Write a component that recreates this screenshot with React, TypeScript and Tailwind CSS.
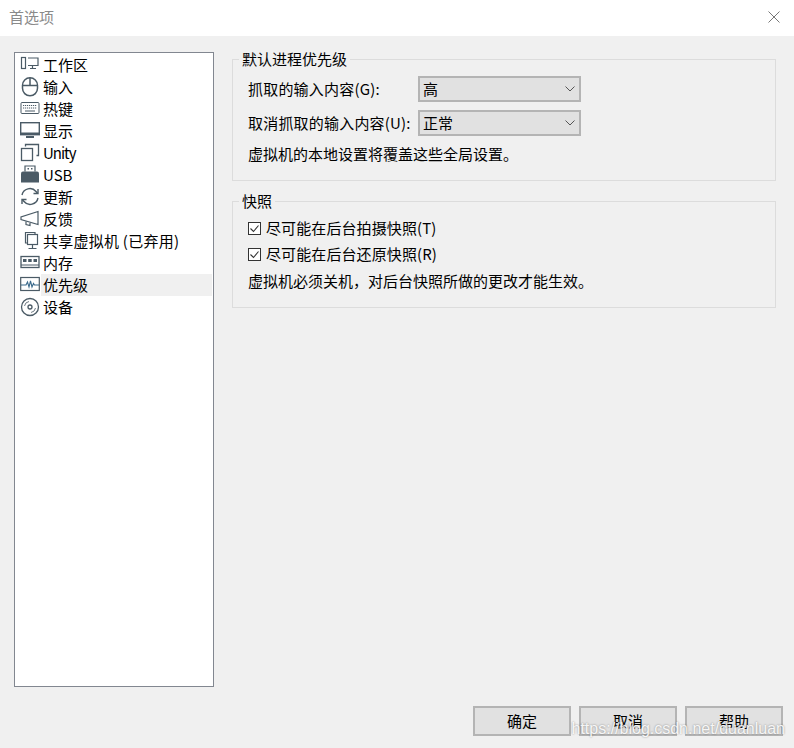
import React from "react";

const font = { fontFamily: '"Noto Sans CJK SC", "Liberation Sans", sans-serif' };
const c = "#4b5b66";

const icons: Record<string, React.ReactNode> = {
  workspace: (
    <g fill="none" stroke={c} strokeWidth="1.2">
      <rect x="1.5" y="2.5" width="4" height="11" />
      <path d="M8 3h10v7.5H8M12.5 10.5v2.5M10 13.5h6" />
    </g>
  ),
  mouse: (
    <g fill="none" stroke={c} strokeWidth="1.5">
      <rect x="2.5" y="0.8" width="15" height="18" rx="7.5" />
      <path d="M2.5 8.5h15M10 0.8v7.7" />
    </g>
  ),
  keyboard: (
    <g fill="none" stroke={c}>
      <rect x="1" y="3.5" width="18" height="11" rx="1" />
      <path d="M3 6.5h14M3 9h14" strokeDasharray="1.2 .8" />
      <path d="M5 12h10" />
    </g>
  ),
  display: (
    <g fill="none" stroke={c} strokeWidth="1.4">
      <rect x="0.7" y="1.7" width="18.6" height="12" />
      <path d="M0.7 12.5h18.6" strokeWidth="2" />
      <path d="M6 16h8" strokeWidth="2" />
    </g>
  ),
  unity: (
    <g fill="none" stroke={c} strokeWidth="1.3">
      <rect x="1.5" y="5.5" width="11" height="12" />
      <path d="M5.5 3.5V1.5h13v11h-2" />
    </g>
  ),
  usb: (
    <g>
      <path d="M1 8.5q0-2 2-2h14q2 0 2 2v9H1z" fill={c} />
      <path d="M5 6.5V1h10v5.5" fill="none" stroke={c} strokeWidth="1.2" />
      <path d="M7.5 3h1.5v1.5H7.5zM11 3h1.5v1.5H11z" fill={c} />
    </g>
  ),
  update: (
    <g fill="none" stroke={c} strokeWidth="1.4">
      <path d="M2 8a8 8 0 0 1 14-3.5l1.5 1.8" />
      <path d="M18 2v4.5h-4.5" />
      <path d="M18 11a8 8 0 0 1-14 3.5l-1.5-1.8" />
      <path d="M2 17v-4.5h4.5" />
    </g>
  ),
  feedback: (
    <g fill="none" stroke={c} strokeWidth="1.2">
      <path d="M1 8v2.5l17 5V2.5z" />
      <path d="M6 12.5v3l4 1v-2.5" />
    </g>
  ),
  share: (
    <g fill="none" stroke={c} strokeWidth="1.2">
      <rect x="7.5" y="3.5" width="10" height="10" />
      <path d="M7.5 12H5.5V1.5H15v2M12.5 13.5v3.5M8.5 17.5h8" />
    </g>
  ),
  memory: (
    <g fill="none" stroke={c}>
      <rect x="1" y="3.5" width="18" height="11" strokeWidth="1.3" />
      <path d="M3 6h3.5v3H3zM8.2 6h3.5v3H8.2zM13.5 6H17v3h-3.5z" fill={c} stroke="none" />
      <path d="M1 12h18" />
    </g>
  ),
  priority: (
    <g fill="none" stroke={c}>
      <rect x="0.7" y="2.5" width="18.6" height="13" strokeWidth="1.2" />
      <path d="M1 10h5l1.5-3 1.5 5 1.5-6 1.5 6 1.5-3.5 1 1.5H19" strokeWidth="1.1" stroke="#3a6a8c" />
    </g>
  ),
  device: (
    <g fill="none" stroke={c} strokeWidth="1.3">
      <circle cx="10" cy="10" r="8.5" />
      <circle cx="10" cy="10" r="2" />
      <path d="M4.5 9a5.5 5.5 0 0 1 4.5-4.5M15.5 11a5.5 5.5 0 0 1-4.5 4.5" strokeWidth="0.8" />
    </g>
  ),
};

const items: [string, string][] = [
  ["workspace", "工作区"],
  ["mouse", "输入"],
  ["keyboard", "热键"],
  ["display", "显示"],
  ["unity", "Unity"],
  ["usb", "USB"],
  ["update", "更新"],
  ["feedback", "反馈"],
  ["share", "共享虚拟机 (已弃用)"],
  ["memory", "内存"],
  ["priority", "优先级"],
  ["device", "设备"],
];

function Select({ value }: { value: string }) {
  return (
    <div className="flex h-[26px] w-[163px] items-center justify-between border-2 border-[#b4b4b4] bg-[#e1e1e1] pl-[3px] pr-[4px]">
      <span>{value}</span>
      <svg width="10" height="6" viewBox="0 0 10 6" fill="none" stroke="#555" strokeWidth="1">
        <path d="M0.5 0.5l4.5 4.5 4.5-4.5" />
      </svg>
    </div>
  );
}

function Check({ label }: { label: string }) {
  return (
    <div className="flex h-[22px] items-center gap-[5px]">
      <svg width="13" height="13" viewBox="0 0 13 13" fill="none" className="shrink-0">
        <rect x="0.5" y="0.5" width="12" height="12" fill="#fff" stroke="#333" />
        <path d="M2.5 6.5l3 3 5-6" stroke="#333" strokeWidth="1.1" />
      </svg>
      <span className="tracking-[0.1px]">{label}</span>
    </div>
  );
}

function Group({ title, className, children }: { title: string; className: string; children: React.ReactNode }) {
  return (
    <fieldset className={`border border-[#dcdcdc] pl-[15px] ${className}`}>
      <legend className="-ml-[9px] px-[3px] leading-[14px]">{title}</legend>
      {children}
    </fieldset>
  );
}

function Btn({ label }: { label: string }) {
  return (
    <div className="flex h-[30px] w-[98px] items-center justify-center border-2 border-[#b4b4b4] bg-[#e1e1e1] text-black">
      {label}
    </div>
  );
}

export default function App() {
  return (
    <div className="relative flex h-[748px] w-[794px] flex-col overflow-hidden bg-[#f0f0f0] text-[15px] text-black" style={font}>
      <div className="flex h-[36px] items-center justify-between bg-white pb-[2px] pl-[9px] pr-[14px] text-[#8a8a8a]">
        <span>首选项</span>
        <svg width="12" height="12" viewBox="0 0 12 12" stroke="#777" strokeWidth="1" fill="none">
          <path d="M0.5 0.5l11 11M11.5 0.5l-11 11" />
        </svg>
      </div>
      <div className="flex flex-1 flex-col pl-[14px] pr-[11px]">
        <div className="flex flex-1 gap-[18px] pt-[16px]">
          <div className="h-[635px] w-[200px] border border-[#828790] bg-white px-[1px] pt-[1px]">
            {items.map(([k, t]) => (
              <div key={k} className="flex h-[22px] items-center">
                <svg width="20" height="20" viewBox="0 0 20 20" className="ml-[4px] shrink-0">
                  {icons[k]}
                </svg>
                <span className={`ml-[1px] flex h-[22px] flex-1 items-center pl-[2px] ${k === "priority" ? "bg-[#f0f0f0]" : ""}`}>
                  <span className={k === "unity" ? "tracking-[-1px]" : k === "share" ? "tracking-[0.25px]" : ""}>{t}</span>
                </span>
              </div>
            ))}
          </div>
          <div className="mr-[7px] flex flex-1 flex-col gap-[13px]">
            <Group title="默认进程优先级" className="h-[129px]">
              <div className="mt-[9px] flex h-[28px] items-center">
                <span className="w-[170px] tracking-[0.2px]">抓取的输入内容(G):</span>
                <Select value="高" />
              </div>
              <div className="mt-[6px] flex h-[28px] items-center">
                <span className="w-[170px] tracking-[0.2px]">取消抓取的输入内容(U):</span>
                <Select value="正常" />
              </div>
              <div className="mt-[5px] leading-[24px]">虚拟机的本地设置将覆盖这些全局设置。</div>
            </Group>
            <Group title="快照" className="h-[114px]">
              <div className="pt-[9px]">
                <Check label="尽可能在后台拍摄快照(T)" />
                <div className="mt-[4px]"><Check label="尽可能在后台还原快照(R)" /></div>
                <div className="mt-[4px] leading-[24px]">虚拟机必须关机，对后台快照所做的更改才能生效。</div>
              </div>
            </Group>
          </div>
        </div>
        <div className="flex h-[42px] items-start justify-end gap-[8px]">
          <Btn label="确定" />
          <Btn label="取消" />
          <Btn label="帮助" />
        </div>
      </div>
      <div className="absolute bottom-[7px] right-[9px] text-[16px] text-white/90 [text-shadow:0_0_2px_rgba(0,0,0,0.45)]" style={{ fontFamily: '"Liberation Sans", sans-serif' }}>
        https://blog.csdn.net/duanluan
      </div>
    </div>
  );
}
